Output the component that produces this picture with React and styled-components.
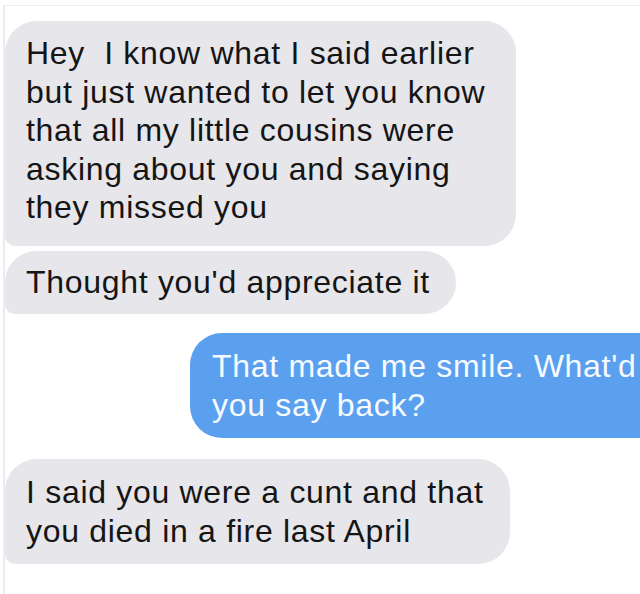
import React from "react";
import styled, { createGlobalStyle } from "styled-components";

const GlobalStyle = createGlobalStyle`
  html, body {
    margin: 0;
    padding: 0;
    background: #ffffff;
    overflow: hidden;
  }
  body {
    font-family: "Liberation Sans", Arial, sans-serif;
  }
`;

const Frame = styled.div`
  width: 640px;
  height: 594px;
  box-sizing: border-box;
  padding-top: 5px;
  padding-left: 3px;
  overflow: hidden;
`;

const Thread = styled.div`
  height: 100%;
  border-top: 1px solid #ececef;
  border-left: 2px solid #ececef;
  box-sizing: border-box;
  display: flex;
  flex-direction: column;
  align-items: flex-start;
  padding-top: 14px;
`;

const Bubble = styled.div`
  box-sizing: border-box;
  font-size: 32px;
  line-height: 38.5px;
  letter-spacing: 0.7px;
  padding: ${(p) => p.$pad};
  border-radius: 32px;
  border-bottom-left-radius: ${(p) => (p.$tail ? 10 : 32)}px;
  margin-top: ${(p) => p.$gap || 0}px;
  width: ${(p) => p.$w}px;
  white-space: nowrap;
  background: ${(p) => (p.$sent ? "#5ba0ef" : "#e6e6eb")};
  color: ${(p) => (p.$sent ? "#f7fbff" : "#151515")};
  align-self: ${(p) => (p.$sent ? "flex-end" : "flex-start")};
  margin-left: ${(p) => (p.$sent ? 0 : 0)}px;
  margin-right: ${(p) => (p.$sent ? -60 : 0)}px;
`;

export default function App() {
  return (
    <>
      <GlobalStyle />
      <Frame>
        <Thread>
          <Bubble $tail $w={511} $gap={1} $pad="13px 20px 19px 21px">
            Hey&nbsp; I know what I said earlier
            <br />
            but just wanted to let you know
            <br />
            that all my little cousins were
            <br />
            asking about you and saying
            <br />
            they missed you
          </Bubble>
          <Bubble $tail $w={451} $gap={5} $pad="12px 20px 13px 21px">
            Thought you'd appreciate it
          </Bubble>
          <Bubble $sent $w={510} $gap={19} $pad="14px 22px 14px 22px">
            That made me smile. What'd
            <br />
            you say back?
          </Bubble>
          <Bubble $tail $w={505} $gap={21} $pad="14px 20px 14px 21px">
            I said you were a cunt and that
            <br />
            you died in a fire last April
          </Bubble>
        </Thread>
      </Frame>
    </>
  );
}
